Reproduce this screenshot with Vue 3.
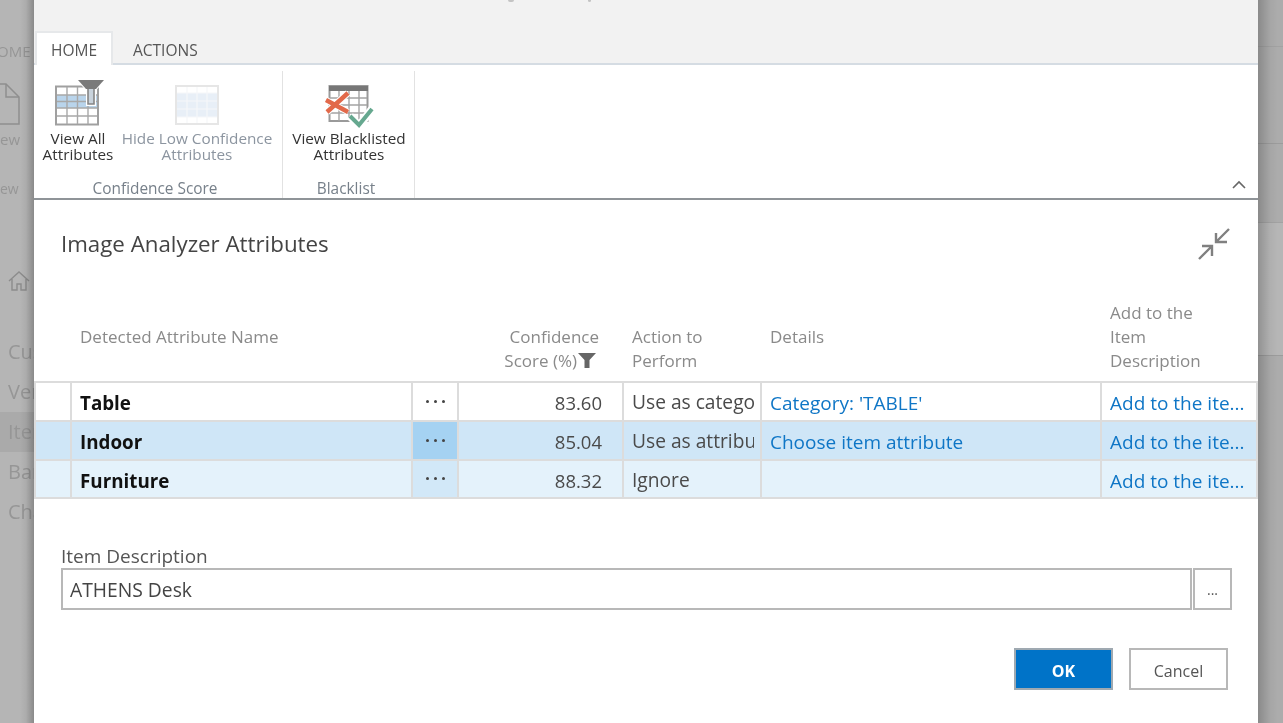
<script setup>
const rows = [
  { name: 'Table', score: '83.60', action: 'Use as category', details: "Category: 'TABLE'", cls: '' },
  { name: 'Indoor', score: '85.04', action: 'Use as attribute', details: 'Choose item attribute', cls: 'selected' },
  { name: 'Furniture', score: '88.32', action: 'Ignore', details: '', cls: 'tinted' }
]
</script>

<template>
  <div class="page">
    <div class="backdrop">
      <div class="bg-tab">HOME</div>
      <svg class="bg-doc" width="20" height="44" viewBox="0 0 20 44"><path d="M-10 1H6L19 14V41H-10Z" fill="none" stroke="#8f8f8f" stroke-width="1.5"/><path d="M6 1V14H19" fill="none" stroke="#8f8f8f" stroke-width="1.5"/></svg>
      <div class="bg-new">ew</div>
      <div class="bg-group">ew</div>
      <svg class="bg-home" width="22" height="22" viewBox="0 0 22 22"><path d="M1 11 11 2l10 9M4 9v11h5v-6h4v6h5V9" fill="none" stroke="#8c8c8c" stroke-width="1.4"/></svg>
      <div class="bg-menu">
        <div>Cus</div><div>Ver</div><div class="bg-active">Iter</div><div>Bar</div><div>Cha</div>
      </div>
    </div>
    <div class="backdrop-right"></div>

    <div class="dialog">
      <i class="top-mark m1"></i>
      <i class="top-mark m2"></i>
      <div class="tabs">
        <div class="tab active">HOME</div>
        <div class="tab">ACTIONS</div>
      </div>

      <div class="ribbon">
        <div class="group group-a">
          <div class="actions">
            <div class="action a1">
              <svg width="62" height="46" viewBox="0 0 62 46">
                <rect x="9" y="6.500" width="42" height="38" fill="#fff" stroke="#a0a0a0" stroke-width="2"/>
                <rect x="10" y="15" width="40" height="13" fill="#b9d4eb"/>
                <path d="M20 7v37M30.500 7v37M41 7v37M10 15h40M10 21.500h40M10 28h40M10 36h40" stroke="#a8a8a8" stroke-width="1.400" fill="none"/>
                <path d="M31 0H57L48 10V25H40V10Z" fill="#fff" stroke="#fff" stroke-width="2"/>
                <path d="M31 0H57L49 9H39Z" fill="#7a7a7a"/>
                <path d="M41 9V24H47V9" fill="#c9d3dc" stroke="#858585" stroke-width="1.600"/>
              </svg>
              <span>View All<br>Attributes</span>
            </div>
            <div class="action a2 off">
              <svg width="46" height="42" viewBox="0 0 46 42">
                <rect x="2" y="2" width="42" height="38" fill="#fff" stroke="#e6e6e6" stroke-width="2"/>
                <rect x="3" y="9" width="40" height="24" fill="#e8eff7"/>
                <path d="M13 3v36M23 3v36M33 3v36M3 9h40M3 17h40M3 25h40M3 33h40" stroke="#f6f7f9" stroke-width="1.200" fill="none"/>
              </svg>
              <span>Hide Low Confidence<br>Attributes</span>
            </div>
          </div>
          <div class="group-label la">Confidence Score</div>
        </div>
        <div class="group group-b">
          <div class="actions">
            <div class="action a3">
              <svg width="52" height="46" viewBox="0 0 52 46">
                <rect x="6.500" y="3" width="38" height="35" fill="#fff" stroke="#9a9a9a" stroke-width="2"/>
                <rect x="6" y="3" width="39" height="5" fill="#777"/>
                <path d="M16 8v30M26 8v30M36 8v30M7 15h37M7 22h37M7 30h37" stroke="#a4a4a4" stroke-width="1.400" fill="none"/>
                <path d="M3 17 25 29M25 10 4 29" stroke="#fff" stroke-width="6.500" fill="none"/>
                <path d="M3 17 25 29M25 10 4 29" stroke="#e2694a" stroke-width="4.400" fill="none"/>
                <path d="M27 33 36 43 49 26" stroke="#fff" stroke-width="8" fill="none"/>
                <path d="M27 33 36 42 49 26" stroke="#66a88f" stroke-width="4" fill="none"/>
              </svg>
              <span>View Blacklisted<br>Attributes</span>
            </div>
          </div>
          <div class="group-label lb">Blacklist</div>
        </div>
        <svg class="collapse" width="16" height="10" viewBox="0 0 16 10"><path d="M2 9 8 3l6 6" fill="none" stroke="#666" stroke-width="1.600"/></svg>
      </div>

      <div class="content">
        <div class="title-row">
          <h1>Image Analyzer Attributes</h1>
          <svg width="34" height="36" viewBox="0 0 34 36">
            <path d="M32 1 19 14M19 5v9h11M2 31 15 18M5 18h10v10" fill="none" stroke="#808080" stroke-width="2.400"/>
          </svg>
        </div>

        <div class="head">
          <div class="h h-name">Detected Attribute Name</div>
          <div class="h h-score">Confidence<br>Score (%)<svg width="18" height="15" viewBox="0 0 18 15"><path d="M0 0H18L11.500 7V15H6.500V7Z" fill="#666"/></svg></div>
          <div class="h h-bottom">Action to<br>Perform</div>
          <div class="h">Details</div>
          <div class="h">Add to the<br>Item<br>Description</div>
        </div>

        <div class="table">
          <div v-for="r in rows" :key="r.name" class="row" :class="r.cls">
            <div class="c"></div>
            <div class="c name">{{ r.name }}</div>
            <div class="c dots"><i></i><i></i><i></i></div>
            <div class="c score">{{ r.score }}</div>
            <div class="c action-cell"><span>{{ r.action }}</span></div>
            <div class="c link">{{ r.details }}</div>
            <div class="c link">Add to the ite...</div>
          </div>
        </div>

        <div class="lower">
          <div class="field-label">Item Description</div>
          <div class="field">
            <div class="input">ATHENS Desk</div>
            <div class="lookup">...</div>
          </div>

          <div class="buttons">
            <div class="btn ok">OK</div>
            <div class="btn cancel">Cancel</div>
          </div>
        </div>
      </div>
    </div>
  </div>
</template>

<style>
html, body { margin: 0; overflow: hidden; }
</style>

<style scoped>
.page {
  position: relative;
  width: 1283px;
  height: 723px;
  overflow: hidden;
  background: #b5b5b5;
  font-family: "Open Sans", "Noto Sans", "Liberation Sans", sans-serif;
  filter: blur(0.4px);
}
.backdrop { position: absolute; inset: 0 auto 0 0; width: 34px; color: #969696; font-size: 16px; }
.backdrop::after { content: ""; position: absolute; inset: 0; background: linear-gradient(to right, rgba(0,0,0,0) 20px, rgba(0,0,0,.05) 26px, rgba(0,0,0,.24) 34px); }
.backdrop-right {
  position: absolute;
  inset: 0 0 0 auto;
  width: 25px;
  background:
    linear-gradient(to right, rgba(0,0,0,.2), rgba(0,0,0,.04) 12px, rgba(0,0,0,0) 20px),
    linear-gradient(to bottom, #acacac 0 46px, #a2a2a2 46px 47px, #acacac 47px 143px, #9c9c9c 143px 144px, #acacac 144px 222px, #a2a2a2 222px 223px, #b6b6b6 223px 355px, #9c9c9c 355px 356px, #acacac 356px);
}
.bg-tab { position: absolute; left: -14px; top: 41px; font-size: 15px; }
.bg-doc { position: absolute; left: 0; top: 83px; }
.bg-new { position: absolute; left: 0; top: 129px; font-size: 15px; }
.bg-group { position: absolute; left: 0; top: 179px; font-size: 14px; }
.bg-home { position: absolute; left: 8px; top: 270px; }
.bg-menu { position: absolute; left: 0; top: 332px; width: 34px; font-size: 20px; white-space: nowrap; overflow: hidden; }
.bg-menu div { height: 40px; line-height: 40px; padding-left: 8px; }
.bg-menu .bg-active { background: #aaaaaa; }

.dialog {
  position: absolute;
  left: 34px;
  top: 0;
  width: 1224px;
  height: 723px;
  background: #fff;
  color: #444;
}
.top-mark { position: absolute; top: 0; height: 2px; background: #c4c4c4; border-radius: 0 0 3px 3px; }
.m1 { left: 474px; width: 6px; }
.m2 { left: 554px; width: 3px; }
.tabs {
  height: 65px;
  box-sizing: border-box;
  background: #f2f2f2;
  border-bottom: 2px solid #d5dce3;
  display: flex;
  align-items: flex-end;
  padding-left: 1px;
  font-size: 15.500px;
}
.tab { height: 34px; line-height: 38px; padding: 0 19px 0 20px; color: #555; margin-bottom: -2px; box-sizing: border-box; }
.tab.active { width: 78px; padding: 0; text-align: center; background: #fff; border: 2px solid #e6e8ea; border-bottom: 0; line-height: 34px; height: 34px; }
.ribbon {
  position: relative;
  height: 135px;
  box-sizing: border-box;
  display: flex;
  border-bottom: 2px solid #8f9498;
  padding-top: 6px;
}
.group { display: flex; flex-direction: column; box-sizing: border-box; border-right: 1px solid #e2e2e2; }
.group-a { width: 249px; }
.group-b { width: 132px; }
.actions { flex: 1; display: flex; }
.action { display: flex; flex-direction: column; align-items: center; font-size: 15.300px; line-height: 16px; color: #333; text-align: center; white-space: nowrap; }
.action svg { display: block; }
.action span { display: block; }
.a1 { width: 88px; }
.a1 svg { margin: 9px 0 0 -1px; height: 46px; }
.a1 span { margin-top: 4px; }
.a2 { width: 150px; color: #8c95a0; }
.a2 svg { margin: 13px 0 0 0; height: 42px; }
.a2 span { margin-top: 4px; }
.a3 { width: 128px; margin-left: 2px; }
.a3 svg { margin: 12px 0 0 0; }
.a3 span { margin-top: 1px; }
.group-label { height: 22px; box-sizing: border-box; padding-top: 2px; line-height: 22px; text-align: center; font-size: 15.400px; color: #77808a; }
.la { padding-right: 6px; }
.lb { padding-right: 5px; }
.collapse { position: absolute; right: 11px; top: 114px; }

.title-row { height: 93px; box-sizing: border-box; padding: 25px 27px 0 27px; display: flex; justify-content: space-between; align-items: flex-start; }
.title-row h1 { margin: 0; font-weight: 400; font-size: 22.300px; line-height: 38px; color: #444; }
.title-row svg { margin-top: 3px; }
.head { display: grid; grid-template-columns: 425px 165px 138px 340px 156px; height: 88px; align-items: center; color: #8a8a8a; font-size: 17px; line-height: 24px; }
.h { padding-left: 8px; }
.h-name { padding-left: 46px; }
.h-score { text-align: right; padding: 0 25px 8px 0; align-self: end; }
.h-score svg { margin: 0 3px 0 1px; vertical-align: -1px; }
.h-bottom { align-self: end; padding-bottom: 8px; }
.table { border: 2px solid #dcdcdc; }
.row { display: grid; grid-template-columns: 36px 341px 46px 165px 138px 340px 154px; height: 39px; box-sizing: border-box; font-size: 18.500px; line-height: 39px; color: #4a4a4a; border-bottom: 2px solid #dcdcdc; }
.row:last-child { height: 36px; border-bottom: 0; }
.c { border-right: 2px solid #dcdcdc; padding: 0 8px; overflow: hidden; white-space: nowrap; box-sizing: border-box; }
.c:last-child { border-right: 0; }
.name { font-weight: 700; color: #111; font-size: 18.800px; line-height: 41px; }
.score { text-align: right; padding-right: 20px; }
.action-cell { padding-right: 6px; line-height: 38px; font-size: 19.200px; }
.action-cell span { display: block; overflow: hidden; }
.link { color: #0f76c6; font-size: 19px; line-height: 41px; }
.dots { display: flex; align-items: center; justify-content: center; gap: 5px; padding: 0 0 1px; }
.dots i { width: 3px; height: 3px; border-radius: 50%; background: #444; }
.selected { background: #cfe6f7; }
.selected .dots { background: #a5d2f2; }
.tinted { background: #e4f2fb; }
.tinted .dots { background: #d2e8f8; }
.lower { padding: 0 26px 0 27px; }
.field-label { margin-top: 45px; font-size: 19px; line-height: 24px; color: #555; }
.field { display: flex; gap: 1px; height: 42px; }
.input { flex: 1; box-sizing: border-box; border: 2px solid #b8b8b8; padding-left: 7px; font-size: 19.300px; line-height: 40px; color: #444; }
.lookup { width: 39px; box-sizing: border-box; border: 2px solid #b8b8b8; text-align: center; font-size: 14px; line-height: 40px; color: #555; }
.buttons { display: flex; justify-content: flex-end; gap: 16px; margin-top: 38px; padding-right: 4px; }
.btn { width: 99px; height: 42px; box-sizing: border-box; border: 2px solid #b8b8b8; text-align: center; font-size: 16px; line-height: 42px; }
.ok { background: #0073c8; color: #fff; font-weight: 700; border-color: #9fa9b1; }
.cancel { color: #555; background: #fff; }
</style>
